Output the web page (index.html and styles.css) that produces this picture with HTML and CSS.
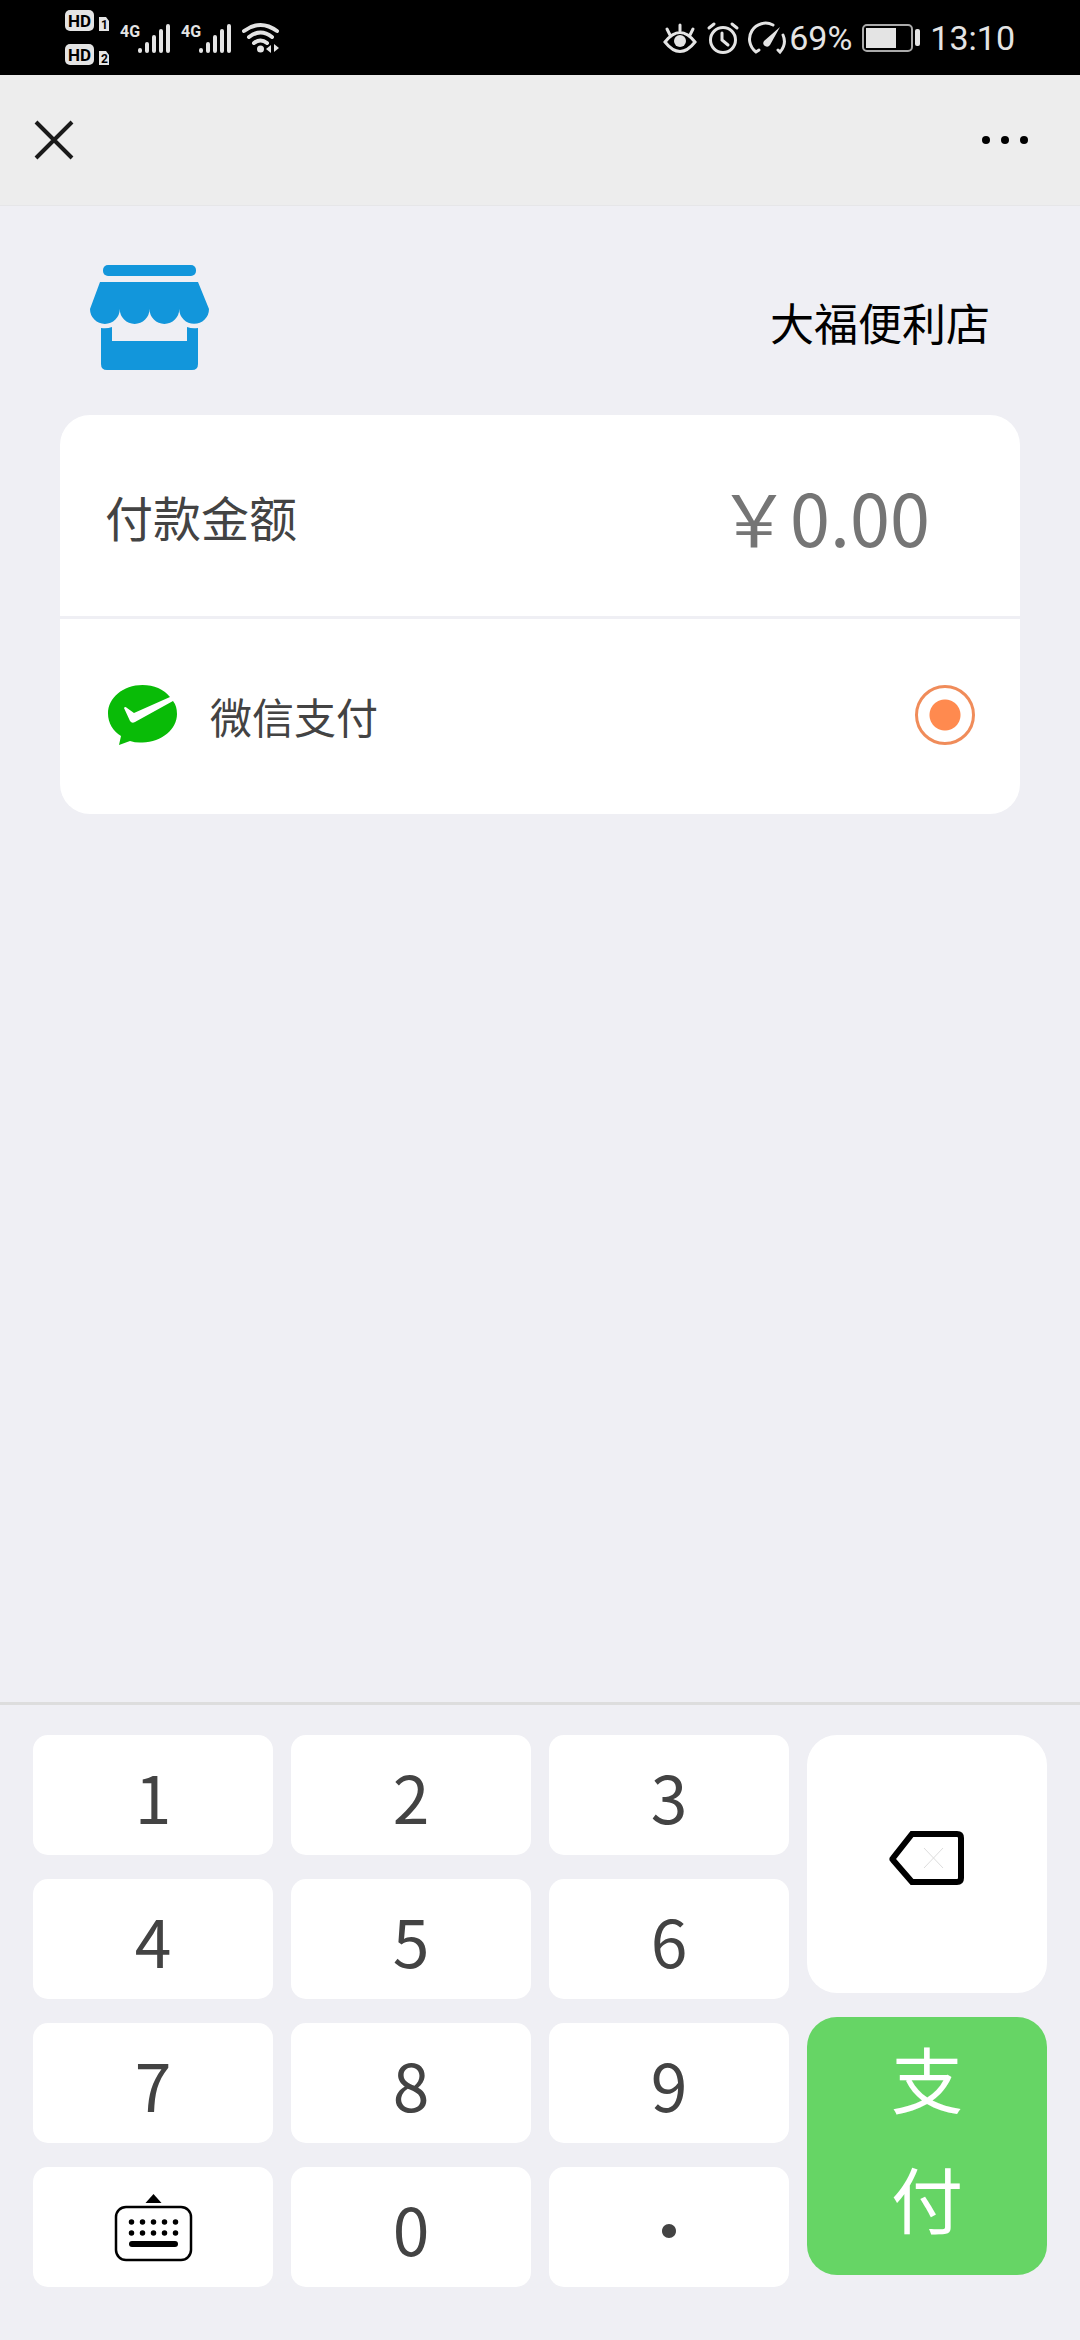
FILE: index.html
```html
<!DOCTYPE html>
<html lang="zh-CN">
<head>
  <meta charset="UTF-8">
  <meta name="viewport" content="width=device-width, initial-scale=1.0">
  <title>大福便利店</title>
  <link rel="stylesheet" href="styles.css">
</head>
<body>
  <!-- Phone status bar -->
  <div class="status-bar">
    <div class="status-left">
      <svg class="hd" width="45" height="56" viewBox="0 0 45 56">
        <rect x="0" y="0" width="29" height="21" rx="5"/>
        <text x="3" y="17">HD</text>
        <path d="M34 7h7l3 4v10H34z"/>
        <text class="sim" x="36" y="19">1</text>
        <rect x="0" y="34" width="29" height="21" rx="5"/>
        <text x="3" y="51">HD</text>
        <path d="M34 41h7l3 4v10H34z"/>
        <text class="sim" x="36" y="53">2</text>
      </svg>
      <svg class="signal" width="51" height="32" viewBox="0 0 51 32">
        <text x="0" y="15">4G</text>
        <path d="M20 28v1M27 22v7M34 15v14M41 9v20M48 4v25"/>
      </svg>
      <svg class="signal" width="51" height="32" viewBox="0 0 51 32">
        <text x="0" y="15">4G</text>
        <path d="M20 28v1M27 22v7M34 15v14M41 9v20M48 4v25"/>
      </svg>
      <svg class="wifi" width="38" height="32" viewBox="0 0 38 32">
        <path d="M2 9Q18.500 -3 35 9M7 15Q18.500 6 30 15M12 21Q18.500 16 25 21"/>
        <circle cx="18.500" cy="27" r="3.500"/>
        <path class="solid" d="M24 27l5-4v8zM37 26l-5-4v8z"/>
      </svg>
    </div>
    <div class="status-right">
      <svg class="line-icon" width="34" height="32" viewBox="0 0 34 32">
        <path d="M2 20Q17 1 32 20Q17 39 2 20zM17 3v6M4 7l3 6M30 7l-3 6"/>
        <circle class="solid" cx="17" cy="19" r="6"/>
      </svg>
      <svg class="line-icon" width="32" height="32" viewBox="0 0 32 32">
        <circle cx="16" cy="18" r="12.500"/>
        <path d="M15 11v7l6 5M2 6l5-4M30 6l-5-4"/>
      </svg>
      <svg class="line-icon" width="38" height="32" viewBox="0 0 38 32">
        <path d="M24 3A16 16 0 0 0 7 30L10 28M34 13Q38 22 31 30L29 28"/>
        <path class="solid" d="M31 5L15 19a3.500 3.500 0 1 0 6 4z"/>
      </svg>
      <span class="percent">69%</span>
      <svg class="battery" width="58" height="28" viewBox="0 0 58 28">
        <rect class="case" x="1" y="1" width="49" height="26" rx="4"/>
        <rect x="4" y="4" width="30" height="20"/>
        <rect x="53" y="5" width="5" height="17" rx="2"/>
      </svg>
      <span>13:10</span>
    </div>
  </div>

  <!-- Top navigation -->
  <nav class="nav-bar">
    <button class="nav-button" type="button" aria-label="关闭">
      <svg width="38" height="38" viewBox="0 0 38 38"><path d="M1 1l36 36M37 1L1 37" stroke="#1a1a1a" stroke-width="4"/></svg>
    </button>
    <button class="nav-button" type="button" aria-label="更多">
      <svg width="46" height="8" viewBox="0 0 46 8"><circle cx="4" cy="4" r="4"/><circle cx="23" cy="4" r="4"/><circle cx="42" cy="4" r="4"/></svg>
    </button>
  </nav>

  <main>
    <!-- Shop info -->
    <header class="store">
      <svg class="store-logo" width="119" height="105" viewBox="0 0 119 105">
        <rect x="13" y="0" width="93" height="11" rx="5"/>
        <path d="M10 17h98l11 27a14.750 14.750 0 0 1-29.750 0a14.750 14.750 0 0 1-29.750 0a14.750 14.750 0 0 1-29.750 0a14.750 14.750 0 0 1-29.750 0z"/>
        <path d="M11 63q6 1 11-1v14h75V62q5 2 11 1v36q0 6-6 6H17q-6 0-6-6z"/>
      </svg>
      <h1>大福便利店</h1>
    </header>

    <section class="card">
      <div class="row amount-row">
        <label for="amount">付款金额</label>
        <input type="text" id="amount" placeholder="￥0.00" readonly>
      </div>
      <label class="row pay-row">
        <svg class="wechat" width="69" height="61" viewBox="0 0 69 61">
          <path fill="#09bb07" d="M34.500 0C15 0 0 13 0 28.500C0 38 5 46 13 51L11 60L22 56Q28 58 34.500 57.500C54 57 69 44 69 29Q69 21 65 16L27 37Q24 39 22 36L16 23Q17 21 19 23L26 28L62 12Q52 0 34.500 0z"/>
        </svg>
        <span>微信支付</span>
        <input type="radio" name="pay" checked>
      </label>
    </section>
  </main>

  <!-- Number keyboard -->
  <div class="keyboard">
    <div class="digits">
      <button class="key" type="button">1</button>
      <button class="key" type="button">2</button>
      <button class="key" type="button">3</button>
      <button class="key" type="button">4</button>
      <button class="key" type="button">5</button>
      <button class="key" type="button">6</button>
      <button class="key" type="button">7</button>
      <button class="key" type="button">8</button>
      <button class="key" type="button">9</button>
      <button class="key toggle" type="button" aria-label="收起键盘">
        <svg width="77" height="67" viewBox="0 0 77 67">
          <path d="M38.500 0l8 9h-16z"/>
          <rect x="1" y="13" width="75" height="53" rx="10" fill="none" stroke="#000" stroke-width="2.500"/>
          <path d="M16.500 28h46M16.500 39h46" stroke="#000" stroke-width="5.500" stroke-linecap="round" stroke-dasharray="0 11"/>
          <path d="M17 50h43" stroke="#000" stroke-width="6" stroke-linecap="round"/>
        </svg>
      </button>
      <button class="key" type="button">0</button>
      <button class="key" type="button">·</button>
    </div>
    <div class="actions">
      <button class="delete" type="button" aria-label="删除">
        <svg width="75" height="54" viewBox="0 0 75 54">
          <path d="M22 3h45q4 0 4 4v40q0 4-4 4H22L3 29q-1-1 0-2z" fill="none" stroke="#000" stroke-width="6"/>
          <path d="M34 17l19 20M53 17L34 37" stroke="#ddd" stroke-width="1"/>
        </svg>
      </button>
      <button class="pay" type="button"><span>支</span><span>付</span></button>
    </div>
  </div>

  <script>
    const amount = document.getElementById('amount');

    // Add the pressed key to the amount
    document.querySelectorAll('.key:not(.toggle)').forEach(key => {
      key.addEventListener('click', () => {
        const next = amount.value.replace('￥', '') + key.textContent.replace('·', '.');
        // Two decimals at most
        if (/^\d+(\.\d{0,2})?$/.test(next)) {
          amount.value = '￥' + next;
        }
      });
    });

    // Remove the last character
    document.querySelector('.delete').addEventListener('click', () => {
      const next = amount.value.slice(0, -1);
      amount.value = next === '￥' ? '' : next;
    });
  </script>
</body>
</html>
```
FILE: styles.css
```css
* {
  box-sizing: border-box;
}

body {
  margin: 0;
  min-height: 100vh;
  display: flex;
  flex-direction: column;
  font-family: "Noto Sans CJK SC", sans-serif;
  color: #434343;
  background: #efeff4;
}

button {
  border: none;
  padding: 0;
  font-family: inherit;
  color: inherit;
  cursor: pointer;
}

svg {
  display: block;
  flex-shrink: 0;
  overflow: visible;
}

/* Status bar */
.status-bar {
  display: flex;
  justify-content: space-between;
  align-items: center;
  height: 75px;
  padding: 0 65px;
  background: #000;
  color: #e4e4e4;
  fill: #e4e4e4;
  font-family: Roboto, sans-serif;
  font-size: 34px;
}

.status-left,
.status-right {
  display: flex;
  align-items: center;
  gap: 10px;
}

.hd text {
  fill: #000;
  font-size: 17px;
  font-weight: bold;
}

.hd .sim {
  font-size: 12px;
}

.signal text {
  font-size: 16px;
  font-weight: bold;
}

.signal path,
.wifi path,
.line-icon path,
.line-icon circle {
  fill: none;
  stroke: #e4e4e4;
  stroke-width: 4;
  stroke-linecap: round;
}

.line-icon path,
.line-icon circle {
  stroke-width: 3;
}

.wifi .solid,
.line-icon .solid {
  fill: #e4e4e4;
  stroke: none;
}

.battery .case {
  fill: none;
  stroke: #aaa;
  stroke-width: 2;
}

.percent {
  margin-left: -8px;
}

/* Navigation */
.nav-bar {
  display: flex;
  justify-content: space-between;
  align-items: center;
  height: 131px;
  padding: 0 52px 0 35px;
  background: #ededed;
  border-bottom: 1px solid #e6e6e8;
}

.nav-button {
  background: none;
}

/* Shop info */
main {
  flex: 1;
  padding: 0 60px;
}

.store {
  display: flex;
  justify-content: space-between;
  align-items: flex-end;
  padding: 59px 30px 45px;
}

.store-logo {
  fill: #1296db;
}

.store h1 {
  margin: 0;
  font-size: 44px;
  font-weight: normal;
  line-height: 96px;
  color: #000;
}

/* Payment card */
.card {
  padding-bottom: 3px;
  background: #fff;
  border-radius: 30px;
}

.row {
  display: flex;
  align-items: center;
  padding: 0 45px;
}

.amount-row {
  height: 204px;
  font-size: 48px;
  border-bottom: 3px solid #efeff4;
}

.amount-row input {
  flex: 1;
  min-width: 0;
  padding: 0 45px;
  border: none;
  outline: none;
  background: none;
  font-family: inherit;
  font-size: 72px;
  text-align: right;
  color: #434343;
}

.amount-row input::placeholder {
  color: #757575;
}

.pay-row {
  height: 192px;
  padding-left: 48px;
  gap: 33px;
  font-size: 42px;
}

.pay-row input {
  appearance: none;
  width: 60px;
  height: 60px;
  margin: 0 0 0 auto;
  border: 3px solid #f08c5a;
  border-radius: 50%;
}

.pay-row input:checked {
  background: radial-gradient(circle, #ff8a4f 15px, transparent 16px);
}

/* Number keyboard */
.keyboard {
  display: grid;
  grid-template-columns: repeat(4, 1fr);
  column-gap: 18px;
  padding: 30px 33px 53px;
  border-top: 3px solid #ddd;
}

.digits {
  grid-column: span 3;
  display: grid;
  grid-template-columns: repeat(3, 1fr);
  grid-auto-rows: 120px;
  gap: 24px 18px;
}

.key {
  display: flex;
  justify-content: center;
  align-items: center;
  font-size: 66px;
  background: #fff;
  border-radius: 15px;
}

.actions {
  display: flex;
  flex-direction: column;
  gap: 24px;
}

.delete,
.pay {
  display: flex;
  flex-direction: column;
  align-items: center;
  height: 258px;
  border-radius: 30px;
}

.delete {
  justify-content: center;
  padding-bottom: 12px;
  background: #fff;
}

.pay {
  font-size: 72px;
  line-height: 120px;
  color: #fff;
  background: #66d565;
}
```
